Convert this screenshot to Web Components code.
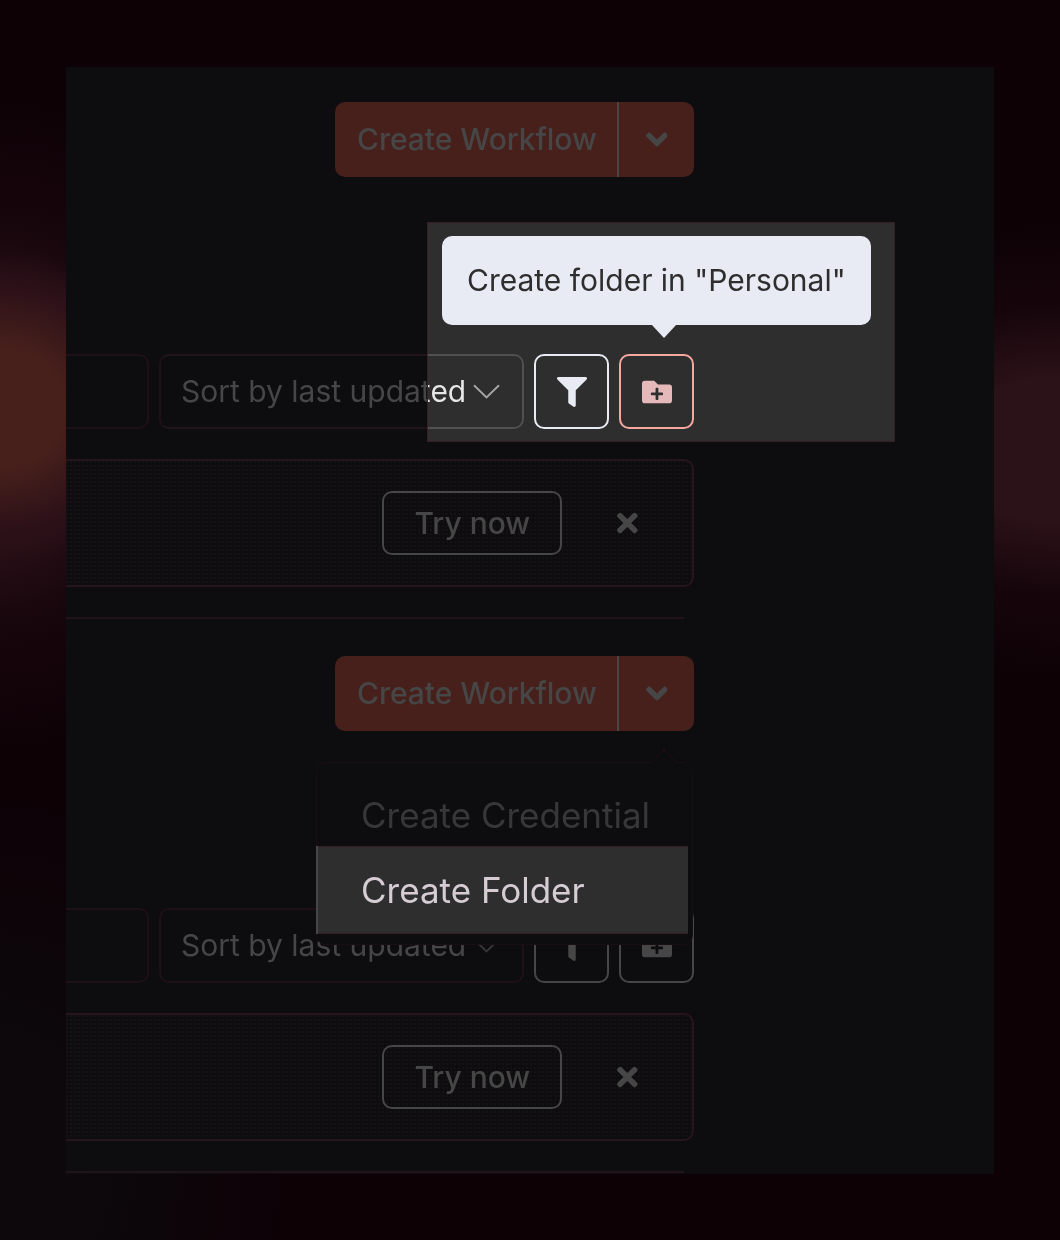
<!DOCTYPE html>
<html lang="en">
<head>
<meta charset="utf-8">
<title>Create folder</title>
<style>
html, body { margin: 0; height: 100%; }
body { background: #0d0106; font-family: Inter, "Liberation Sans", sans-serif; }
</style>
</head>
<body>
<app-stage>
  <workflow-section>
    <sort-toolbar slot="toolbar" spotlight></sort-toolbar>
  </workflow-section>
  <workflow-section>
    <create-menu slot="menu"></create-menu>
    <sort-toolbar slot="toolbar"></sort-toolbar>
  </workflow-section>
</app-stage>
<script>
const define = (name, html) => customElements.define(name, class extends HTMLElement {
  constructor() {
    super();
    const t = document.createElement('template');
    t.innerHTML = html;
    this.attachShadow({ mode: 'open' }).append(t.content.cloneNode(true));
  }
});

const ICONS = {
  filter: ['0 0 512 512', 'M487.976 0H24.028C2.71 0-8.047 25.866 7.058 40.971L192 225.941V432c0 7.831 3.821 15.17 10.237 19.662l80 55.98C298.02 518.69 320 507.493 320 487.98V225.941l184.947-184.97C520.021 25.896 509.338 0 487.976 0z'],
  folder: ['0 0 512 512', 'M464 128H272L208 64H48A48 48 0 0 0 0 112V400a48 48 0 0 0 48 48H464a48 48 0 0 0 48-48V176A48 48 0 0 0 464 128ZM359.5 296a16 16 0 0 1-16 16h-64v64a16 16 0 0 1-16 16h-16a16 16 0 0 1-16-16V312h-64a16 16 0 0 1-16-16V280a16 16 0 0 1 16-16h64V200a16 16 0 0 1 16-16h16a16 16 0 0 1 16 16v64h64a16 16 0 0 1 16 16Z'],
  times: ['0 0 352 512', 'M242.72 256l100.07-100.07c12.28-12.28 12.28-32.19 0-44.48l-22.24-22.24c-12.28-12.28-32.19-12.28-44.48 0L176 189.28 75.93 89.21c-12.28-12.28-32.19-12.28-44.48 0L9.21 111.45c-12.28 12.28-12.28 32.19 0 44.48L109.28 256 9.21 356.07c-12.28 12.28-12.28 32.19 0 44.48l22.24 22.24c12.28 12.28 32.2 12.28 44.48 0L176 322.72l100.07 100.07c12.28 12.28 32.2 12.28 44.48 0l22.24-22.24c12.28-12.28 12.28-32.19 0-44.48L242.72 256z'],
  angle: ['0 0 320 512', 'M143 352.3L7 216.3c-9.4-9.4-9.4-24.6 0-33.9l22.6-22.6c9.4-9.4 24.6-9.4 33.9 0l96.4 96.4 96.4-96.4c9.4-9.4 24.6-9.4 33.9 0l22.6 22.6c9.4 9.4 9.4 24.6 0 33.9l-136 136c-9.2 9.4-24.4 9.4-33.8 0z']
};
customElements.define('ui-icon', class extends HTMLElement {
  connectedCallback() {
    if (this.shadowRoot) return;
    const [box, d] = ICONS[this.getAttribute('name')];
    this.attachShadow({ mode: 'open' }).innerHTML =
      `<style>:host{display:block;height:30px}svg{display:block;height:100%;fill:currentColor}</style>
       <svg viewBox="${box}"><path d="${d}"/></svg>`;
  }
});

define('split-button', `
<style>
:host { display: flex; width: 359px; height: 75px; border-radius: 10px; background: #47201c; color: #464646; overflow: hidden; }
.label { box-sizing: border-box; width: 282px; padding: 0 0 2px 22px; display: flex; align-items: center; font-size: 30px; font-weight: 500; letter-spacing: -0.05px; white-space: nowrap; }
.more { flex: 1; display: flex; align-items: center; justify-content: center; border-left: 2px solid #464646; }
ui-icon { height: 35px; }
</style>
<div class="label"><span>Create Workflow</span></div>
<div class="more"><ui-icon name="angle"></ui-icon></div>`);

define('icon-button', `
<style>
:host { box-sizing: border-box; flex: none; display: flex; align-items: center; justify-content: center; width: 75px; height: 75px; border: 2px solid currentColor; border-radius: 10px; color: #464646; }
</style>
<slot></slot>`);

define('tool-tip', `
<style>
:host { position: relative; box-sizing: border-box; display: flex; align-items: center; width: 429px; height: 89px; padding: 0 0 2px 25px; border-radius: 10px; background: #e8ebf4; color: #2e2e2e; font-size: 30px; white-space: nowrap; }
:host::after { content: ""; position: absolute; left: 209px; top: 100%; margin-top: -1px; border: 13px solid transparent; border-top: 14px solid #e8ebf4; border-bottom: 0; }
</style>
<span><slot></slot></span>`);

define('sort-toolbar', `
<style>
:host { position: relative; display: flex; gap: 10px; height: 75px; }
.field { box-sizing: border-box; border: 2px solid #1e1115; border-radius: 10px; }
.search { width: 83px; border-left: 0; border-radius: 0 10px 10px 0; }
.select { width: 365px; display: flex; align-items: center; padding: 0 22px 0 20px; justify-content: space-between; font-size: 30px; color: #464646; white-space: nowrap; }
.select span { padding-bottom: 2px; }
.select svg { display: block; width: 27px; height: 15px; fill: none; stroke: #363636; stroke-width: 2; }
.lens { display: none; }
:host([spotlight]) .lens { display: block; position: absolute; left: 361px; top: -132px; width: 468px; height: 220px; box-shadow: inset 0 0 0 1px #371f25; background: rgba(255, 255, 255, .014); backdrop-filter: grayscale(1) brightness(3.3); }
icon-button { position: relative; z-index: 1; }
:host([spotlight]) .select { border-color: #221519; border-left-color: #1e1115; }
:host([spotlight]) .select svg { stroke: #323232; }
:host([spotlight]) .filter { color: #e8ebf4; }
:host([spotlight]) .folder { color: #f6a79f; }
:host([spotlight]) .folder ui-icon { color: #e5b9b9; }
</style>
<div class="field search"></div>
<div class="field select"><span>Sort by last updated</span><svg viewBox="0 0 27 15"><path d="M1 1.2 13.5 13.4 26 1.2"/></svg></div>
<icon-button class="filter"><ui-icon name="filter"></ui-icon></icon-button>
<icon-button class="folder"><ui-icon name="folder"></ui-icon></icon-button>
<div class="lens"></div>`);

define('notice-banner', `
<style>
:host { box-sizing: border-box; display: flex; align-items: center; justify-content: flex-end; height: 128px; padding-right: 54px; gap: 55px; border: 2px solid #26151a; border-left: 0; border-radius: 0 10px 10px 0; background: radial-gradient(circle at 1px 1px, #171114 0.7px, transparent 0.8px) 0 0 / 4px 4px #0d0d0f; color: #464646; }
.try { box-sizing: border-box; width: 180px; height: 64px; border: 2px solid #464646; border-radius: 10px; display: flex; align-items: center; justify-content: center; font-size: 30px; font-weight: 500; white-space: nowrap; }
</style>
<div class="try"><span>Try now</span></div>
<ui-icon name="times"></ui-icon>`);

define('create-menu', `
<style>
:host { position: relative; box-sizing: border-box; display: flex; flex-direction: column; width: 377px; height: 183px; padding-top: 8px; border: 1px dotted #28111a; border-radius: 10px; background: #0d0d0f; font-size: 35px; white-space: nowrap; }
:host::before { content: ""; position: absolute; left: 337px; top: -10px; width: 19px; height: 19px; transform: rotate(45deg); border: dotted #2f121b; border-width: 1px 0 0 1px; background: #0d0d0f; }
.item { position: relative; box-sizing: border-box; display: flex; align-items: center; height: 75px; padding: 12px 0 0 44px; color: #383738; }
.active { height: 88px; width: 372px; margin-left: -1px; padding: 0 0 0 43px; border-left: 2px solid #464646; background: #2e2e2e; box-shadow: inset 0 1px #321f24, inset 0 -1px #321f24; color: #d6ccd4; }
</style>
<div class="item"><span>Create Credential</span></div>
<div class="item active"><span>Create Folder</span></div>`);

define('workflow-section', `
<style>
:host { box-sizing: border-box; flex: none; display: flex; flex-direction: column; width: 628px; height: 554px; padding-top: 35px; }
.head { position: relative; display: flex; justify-content: flex-end; height: 252px; }
.menu { position: absolute; z-index: 3; right: 1px; top: 106px; }
.tools { height: 75px; }
notice-banner { margin-top: 30px; }
.next { height: 2px; margin: 30px 10px 0 0; overflow: hidden; }
.next::before { content: ""; box-sizing: border-box; display: block; height: 60px; border-top: 2px solid #20131a; }
</style>
<div class="head"><split-button></split-button><div class="menu"><slot name="menu"></slot></div></div>
<div class="tools"><slot name="toolbar"></slot></div>
<notice-banner></notice-banner>
<div class="next"></div>`);

define('app-stage', `
<style>
:host { box-sizing: border-box; position: relative; display: flex; width: 1060px; height: 1240px; padding: 67px 66px;
  background:
    radial-gradient(ellipse 170px 155px at 0 408px, #47201b 0 38%, #2b1018 80%, rgba(43,16,24,0) 100%),
    radial-gradient(ellipse 260px 330px at 0 425px, #2b1018 0 32%, rgba(43,16,24,.35) 60%, rgba(43,16,24,0) 100%),
    radial-gradient(ellipse 330px 230px at 1060px 450px, #2b1118 0 32%, rgba(43,17,24,.3) 62%, rgba(43,17,24,0) 100%),
    radial-gradient(ellipse 290px 380px at 0 1170px, #0c080b 0 30%, rgba(12,8,11,0) 100%),
    #0d0106; }
.panel { position: relative; width: 928px; height: 1107px; overflow: hidden; background: #0d0d0f; display: flex; flex-direction: column; }
tool-tip { position: absolute; z-index: 4; left: 376px; top: 169px; }
</style>
<div class="panel"><slot></slot><tool-tip>Create folder in "Personal"</tool-tip></div>`);
</script>
</body>
</html>
